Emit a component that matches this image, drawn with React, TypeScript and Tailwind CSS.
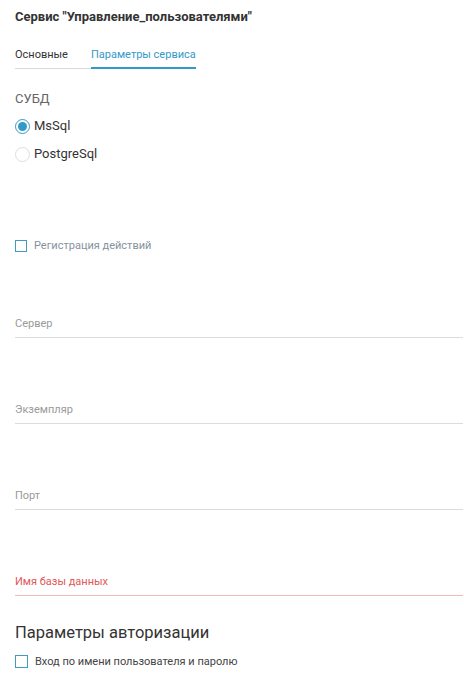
import React from "react";

function Field({ label, error }: { label: string; error?: boolean }) {
  return (
    <div
      className={
        "h-[86px] flex items-end border-b " +
        (error ? "border-[#f3b9b9]" : "border-[#dcdcdc]")
      }
    >
      <span
        className={
          "text-[11px] leading-[14px] pb-[6px] " +
          (error ? "text-[#e0575a]" : "text-[#9a9a9a]")
        }
      >
        {label}
      </span>
    </div>
  );
}

function Checkbox({ label, size, textClass }: { label: string; size: string; textClass: string }) {
  return (
    <div className="flex items-center gap-[7px]">
      <span className={size + " border-[1.5px] border-[#3d9cc4] bg-white box-border shrink-0"} />
      <span className={textClass}>{label}</span>
    </div>
  );
}

export default function App() {
  return (
    <div
      className="w-[464px] h-[679px] bg-white pl-[15px] pr-[1px] overflow-hidden"
      style={{ fontFamily: "Roboto, 'Liberation Sans', sans-serif" }}
    >
      <div className="pt-[9px] text-[13px] leading-[16px] font-bold text-[#333333]">
        Сервис "Управление_пользователями"
      </div>

      <div className="mt-[22px] flex items-end text-[11px] leading-[16px]">
        <div className="pr-[23px] pb-[5px] border-b border-[#d9d9d9] text-[#333333]">Основные</div>
        <div className="pb-[4px] border-b-2 border-[#3399c7] text-[#3399c7]">Параметры сервиса</div>
      </div>

      <div className="mt-[22px] text-[13px] leading-[16px] text-[#666666]">СУБД</div>

      <div className="mt-[9px] flex items-center h-[20px] gap-[4px]">
        <span className="w-[15px] h-[15px] rounded-full border-[1.5px] border-[#3399c7] flex items-center justify-center box-border">
          <span className="w-[9px] h-[9px] rounded-full bg-[#3399c7]" />
        </span>
        <span className="text-[13px] text-[#333333]">MsSql</span>
      </div>
      <div className="mt-[8px] flex items-center h-[20px] gap-[4px]">
        <span className="w-[15px] h-[15px] rounded-full border border-[#dddddd] box-border" />
        <span className="text-[13px] text-[#333333]">PostgreSql</span>
      </div>

      <div className="mt-[76px] h-[12px] flex items-center">
        <Checkbox label="Регистрация действий" size="w-[12px] h-[12px]" textClass="text-[11px] leading-[14px] text-[#8592a0]" />
      </div>

      <Field label="Сервер" />
      <Field label="Экземпляр" />
      <Field label="Порт" />
      <Field label="Имя базы данных" error />

      <div className="mt-[26px] text-[16.5px] leading-[22px] text-[#333333]">Параметры авторизации</div>

      <div className="mt-[11px] h-[13px] flex items-center">
        <Checkbox label="Вход по имени пользователя и паролю" size="w-[13px] h-[13px]" textClass="text-[11px] leading-[14px] text-[#444444]" />
      </div>
    </div>
  );
}
